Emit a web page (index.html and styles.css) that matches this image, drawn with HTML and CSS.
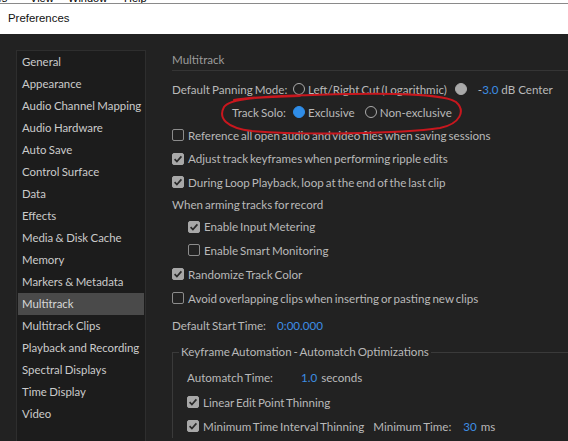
FILE: index.html
```html
<!DOCTYPE html>
<html>
<head>
<meta charset="utf-8">
<link rel="stylesheet" href="styles.css">
</head>
<body>
<div class="menubar"><div class="menu-inner"><span class="m1">Favorites</span><span class="m2">View</span><span class="m3">Window</span><span class="m4">Help</span></div></div>
<div class="titlebar">Preferences</div>
<div class="main">
  <div class="sidebar">
    <div class="item">General</div>
    <div class="item">Appearance</div>
    <div class="item">Audio Channel Mapping</div>
    <div class="item">Audio Hardware</div>
    <div class="item">Auto Save</div>
    <div class="item">Control Surface</div>
    <div class="item">Data</div>
    <div class="item">Effects</div>
    <div class="item">Media &amp; Disk Cache</div>
    <div class="item">Memory</div>
    <div class="item">Markers &amp; Metadata</div>
    <div class="item selected">Multitrack</div>
    <div class="item">Multitrack Clips</div>
    <div class="item">Playback and Recording</div>
    <div class="item">Spectral Displays</div>
    <div class="item">Time Display</div>
    <div class="item">Video</div>
  </div>
  <div class="content">
    <div class="heading">Multitrack</div>

    <div class="row r-pan">
      <span class="rlabel">Default Panning Mode:</span>
      <span class="radio"></span><span class="opt">Left/Right Cut (Logarithmic)</span>
      <span class="radio filled-gray gap-l"></span><span class="opt db">-<span class="blue">3.0</span> dB Center</span>
    </div>
    <div class="row r-solo">
      <span class="rlabel">Track Solo:</span>
      <span class="radio filled-blue"></span><span class="opt">Exclusive</span>
      <span class="radio gap-m"></span><span class="opt">Non-exclusive</span>
    </div>

    <div class="row r24"><span class="cb"></span><span>Reference all open audio and video files when saving sessions</span></div>
    <div class="row r23"><span class="cb on"><svg viewBox="0 0 12 12"><path d="M2.6 6.2 L4.9 8.6 L9.4 3.4"/></svg></span><span>Adjust track keyframes when performing ripple edits</span></div>
    <div class="row r24"><span class="cb on"><svg viewBox="0 0 12 12"><path d="M2.6 6.2 L4.9 8.6 L9.4 3.4"/></svg></span><span>During Loop Playback, loop at the end of the last clip</span></div>
    <div class="row r21"><span>When arming tracks for record</span></div>
    <div class="row r23 indent"><span class="cb on"><svg viewBox="0 0 12 12"><path d="M2.6 6.2 L4.9 8.6 L9.4 3.4"/></svg></span><span>Enable Input Metering</span></div>
    <div class="row r24 indent"><span class="cb"></span><span>Enable Smart Monitoring</span></div>
    <div class="row r24"><span class="cb on"><svg viewBox="0 0 12 12"><path d="M2.6 6.2 L4.9 8.6 L9.4 3.4"/></svg></span><span>Randomize Track Color</span></div>
    <div class="row r24"><span class="cb"></span><span>Avoid overlapping clips when inserting or pasting new clips</span></div>
    <div class="row r30"><span class="lbl-start">Default Start Time:</span><span class="blue">0:00.000</span></div>

    <div class="group">
      <div class="group-title">Keyframe Automation - Automatch Optimizations</div>
      <div class="row r25 first"><span class="lbl-auto">Automatch Time:</span><span class="blue">1.0</span><span class="unit">seconds</span></div>
      <div class="row r24"><span class="cb on"><svg viewBox="0 0 12 12"><path d="M2.6 6.2 L4.9 8.6 L9.4 3.4"/></svg></span><span>Linear Edit Point Thinning</span></div>
      <div class="row r24"><span class="cb on"><svg viewBox="0 0 12 12"><path d="M2.6 6.2 L4.9 8.6 L9.4 3.4"/></svg></span><span>Minimum Time Interval Thinning</span><span class="lbl-min">Minimum Time:</span><span class="blue">30</span><span class="unit">ms</span></div>
    </div>
  </div>
  <svg class="annot" width="568" height="441" viewBox="0 0 568 441">
    <path d="M300 96 C262 97 230 98 224 107 C218 118 226 128 252 131 C300 135 400 134 440 128 C460 124 466 111 456 102 C446 95 400 93 350 94 C300 95 252 97 234 100"/>
  </svg>
</div>
</body>
</html>
```
FILE: styles.css
```css
* { box-sizing: border-box; }
html, body { margin: 0; padding: 0; }
body {
  width: 568px;
  height: 441px;
  overflow: hidden;
  background: #222222;
  font-family: Lato, "Liberation Sans", sans-serif;
  position: relative;
}
.menubar {
  height: 4px;
  background: #fff;
  border-bottom: 1px solid #8a8a8a;
  overflow: hidden;
}
.menu-inner {
  margin-top: -7px;
  margin-left: -38px;
  font: 11px/11px "Liberation Sans", sans-serif;
  color: #000;
  white-space: nowrap;
  display: flex;
}
.m1 { width: 68px; flex: none; }
.m2 { width: 38px; flex: none; }
.m3 { width: 56px; flex: none; }
.titlebar {
  height: 30px;
  background: #fff;
  color: #111;
  font: 11.4px "Liberation Sans", sans-serif;
  line-height: 29px;
  padding-left: 8px;
}
.main {
  height: 407px;
  display: flex;
  padding: 16px 0 0 16px;
  gap: 26px;
  overflow: hidden;
}
.sidebar {
  width: 130px;
  height: 420px;
  flex: none;
  background: #1c1c1c;
  border: 1px solid #2e2e2e;
  padding: 0 1px;
}
.item {
  height: 22px;
  line-height: 22px;
  padding-left: 4px;
  font-size: 11.4px;
  word-spacing: -0.5px;
  color: #cbcbcb;
  white-space: nowrap;
}
.item.selected { background: #4a4a4a; color: #d8d8d8; }
.content {
  flex: 1;
  font-size: 11.6px;
  word-spacing: -1px;
  color: #b9b9b9;
}
.heading {
  height: 21px;
  line-height: 20px;
  color: #9c9c9c;
  border-bottom: 1px solid #353535;
  margin-bottom: 6px;
}
.row {
  display: flex;
  align-items: center;
  white-space: nowrap;
}
.r-pan { height: 24px; }
.r-solo { height: 22px; }
.r25 { height: 25px; }
.r24 { height: 24px; }
.r23 { height: 23px; }
.r21 { height: 21px; }
.r30 { height: 30px; }
.indent { padding-left: 16px; }
.rlabel { width: 114px; text-align: right; margin-right: 7px; flex: none; }
.radio {
  width: 12px;
  height: 12px;
  border-radius: 50%;
  border: 1.5px solid #ababab;
  flex: none;
  margin-right: 3px;
}
.radio.filled-gray { background: #a9a9a9; border-color: #a9a9a9; }
.radio.filled-blue { background: #2f8de8; border-color: #2f8de8; }
.gap-l { margin-left: 8px; }
.gap-m { margin-left: 10px; }
.db { margin-left: 8px; word-spacing: 0; }
.blue { color: #3d8ee4; }
.cb {
  width: 12px;
  height: 12px;
  flex: none;
  border: 1px solid #8c8c8c;
  border-radius: 2px;
  margin-right: 4px;
  display: flex;
  align-items: center;
  justify-content: center;
}
.cb.on { background: #a8a8a8; border-color: #a8a8a8; }
.cb svg { width: 12px; height: 12px; flex: none; }
.cb svg path { fill: none; stroke: #2a2a2a; stroke-width: 1.7; }
.lbl-start { margin-right: 11px; }
.group {
  margin-top: 12px;
  border-top: 1px solid #3a3a3a;
  border-left: 1px solid #3a3a3a;
  padding-left: 14px;
}
.group-title {
  display: block;
  width: max-content;
  margin: -11px 0 0 -8px;
  padding: 0 2px;
  line-height: 20px;
  background: #222222;
}
.group .first { margin-top: 3px; }
.lbl-auto { width: 114px; flex: none; }
.unit { margin-left: 4px; }
.lbl-min { margin-left: 9px; margin-right: 12px; }
.annot {
  position: absolute;
  left: 0;
  top: 0;
  pointer-events: none;
}
.annot path { fill: none; stroke: #c8171e; stroke-width: 2; stroke-linecap: round; }
```
